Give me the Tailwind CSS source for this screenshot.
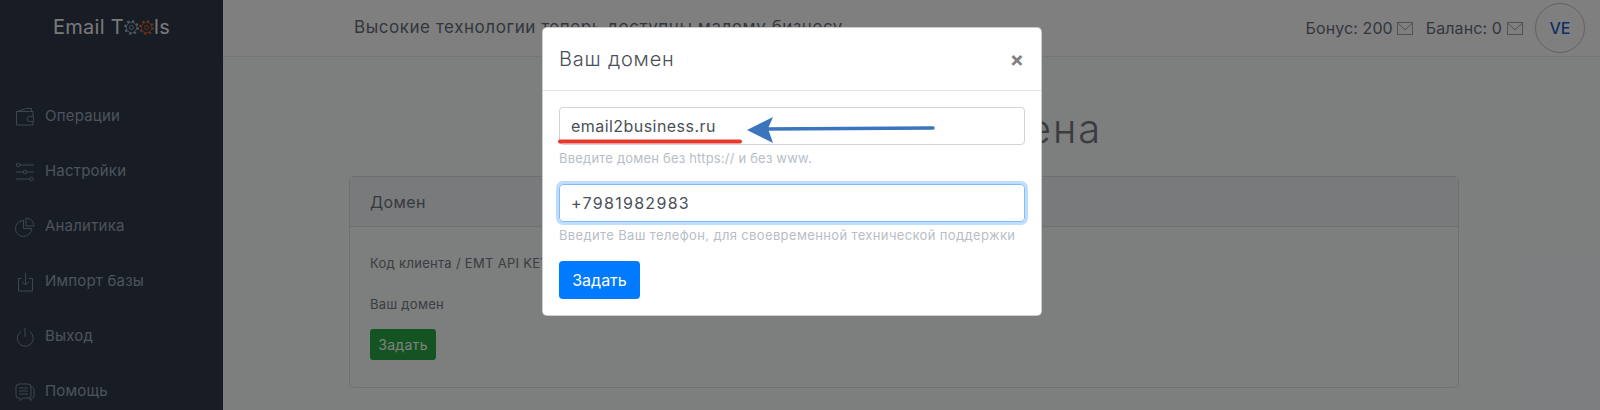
<!DOCTYPE html>
<html lang="ru">

<head>
    <meta charset="UTF-8">
    <title>Email Tools</title>
    <script src="https://cdn.jsdelivr.net/npm/@tailwindcss/browser@4"></script>
</head>

<body class="font-['Inter',sans-serif] overflow-hidden">

    <div class="relative flex h-[410px] w-[1600px] overflow-hidden bg-[#fafcfd]">

        <!-- Sidebar -->
        <aside class="w-[223px] shrink-0 bg-[#303a4a] text-[#9aa6b8]">
            <div class="flex h-[54px] items-center justify-center text-[20px] tracking-[0.3px] text-[#f0f2f4]">
                <span>Email T</span>
                <svg class="h-[15px] w-[15px] text-[#a9c4e0]" viewBox="0 0 16 16" fill="none" stroke="currentColor" stroke-width="0.8">
                    <circle cx="8" cy="8" r="5.5" />
                    <circle cx="8" cy="8" r="6.8" stroke-width="2" stroke-dasharray="2.4 2.9" />
                    <circle cx="8" cy="8" r="2.2" />
                </svg>
                <svg class="h-[15px] w-[15px] text-[#f0642a]" viewBox="0 0 16 16" fill="none" stroke="currentColor" stroke-width="0.8">
                    <circle cx="8" cy="8" r="5.5" />
                    <circle cx="8" cy="8" r="6.8" stroke-width="2" stroke-dasharray="2.4 2.9" />
                    <circle cx="8" cy="8" r="2.2" />
                </svg>
                <span>ls</span>
            </div>

            <nav class="mt-[35px] flex flex-col text-[15px] tracking-[0.2px]">
                <a class="flex h-[55px] items-center gap-[10px] pl-[15px]">
                    <svg class="h-[20px] w-[20px] text-[#7f8b9b]" viewBox="0 0 20 20" fill="none" stroke="currentColor">
                        <path d="M1.5 4.500v13.500h16.500v-3M1.500 4.500h16.500v5M1.500 4.500 12 1.500h4.500v3" />
                        <path d="M18.500 9.500h-4a2.500 2.500 0 0 0 0 5h4z" />
                    </svg>
                    <span>Операции</span>
                </a>
                <a class="flex h-[55px] items-center gap-[10px] pl-[15px]">
                    <svg class="h-[20px] w-[20px] text-[#7f8b9b]" viewBox="0 0 20 20" fill="none" stroke="currentColor">
                        <path d="M5 3h14M1 10h7M12 10h7M1 17h13" />
                        <circle cx="3.200" cy="3" r="1.800" />
                        <circle cx="10" cy="10" r="1.800" />
                        <circle cx="16.500" cy="17" r="1.800" />
                    </svg>
                    <span>Настройки</span>
                </a>
                <a class="flex h-[55px] items-center gap-[10px] pl-[15px]">
                    <svg class="h-[20px] w-[20px] text-[#7f8b9b]" viewBox="0 0 20 20" fill="none" stroke="currentColor">
                        <path d="M8.500 3.500a8 8 0 1 0 8 8h-8z" />
                        <path d="M11 1a8 8 0 0 1 8 8h-8z" />
                    </svg>
                    <span>Аналитика</span>
                </a>
                <a class="flex h-[55px] items-center gap-[10px] pl-[15px]">
                    <svg class="h-[20px] w-[20px] text-[#7f8b9b]" viewBox="0 0 20 20" fill="none" stroke="currentColor">
                        <path d="M7 6.500H3.500v12.500h14V6.500H14" />
                        <path d="M10.500 1v11.500M7 9.500l3.500 3.500 3.500-3.500" />
                    </svg>
                    <span>Импорт базы</span>
                </a>
                <a class="flex h-[55px] items-center gap-[10px] pl-[15px]">
                    <svg class="h-[20px] w-[20px] text-[#7f8b9b]" viewBox="0 0 20 20" fill="none" stroke="currentColor">
                        <path d="M6 4.500a8 8 0 1 0 8.500 0" />
                        <path d="M10 1v9" />
                    </svg>
                    <span>Выход</span>
                </a>
                <a class="flex h-[55px] items-center gap-[10px] pl-[15px]">
                    <svg class="h-[20px] w-[20px] text-[#7f8b9b]" viewBox="0 0 20 20" fill="none" stroke="currentColor">
                        <path d="M4 2h9a3 3 0 0 1 3 3v8a3 3 0 0 1-3 3H8l-3 2.500V16H4a3 3 0 0 1-3-3V5a3 3 0 0 1 3-3z" />
                        <path d="M16 4.500c2 .5 3 1.500 3 3.500v6c0 1.500-1 2.500-3 2.500v2l-3-2.500M4 6h9M4 9h9M4 12h9" />
                    </svg>
                    <span>Помощь</span>
                </a>
            </nav>
        </aside>

        <!-- Right column -->
        <div class="flex min-w-0 flex-1 flex-col">
            <header class="flex h-[57px] shrink-0 items-center justify-between border-b border-[#e6edf2] bg-white pl-[131px] pr-[15px] text-[#666e7a]">
                <p class="text-[17px] tracking-[0.55px]">Высокие технологии теперь доступны малому бизнесу</p>
                <div class="flex items-center text-[16px] tracking-[0.1px]">
                    <span>Бонус: 200</span>
                    <svg class="ml-[4px] h-[13px] w-[16px] text-[#a0a6ac]" viewBox="0 0 16 13" fill="none" stroke="currentColor">
                        <rect x="0.500" y="0.500" width="15" height="12" />
                        <path d="M0.500 1 8 8l7.500-7" />
                    </svg>
                    <span class="ml-[13px]">Баланс: 0</span>
                    <svg class="ml-[5px] h-[13px] w-[16px] text-[#a0a6ac]" viewBox="0 0 16 13" fill="none" stroke="currentColor">
                        <rect x="0.500" y="0.500" width="15" height="12" />
                        <path d="M0.500 1 8 8l7.500-7" />
                    </svg>
                    <div class="ml-[12px] flex h-[50px] w-[50px] items-center justify-center rounded-full border border-[#c4c4c4] text-[16px] font-medium text-[#1a5fd0]">VE</div>
                </div>
            </header>

            <main class="pl-[126px] pr-[141px]">
                <h1 class="mt-[48px] h-[71px] text-center text-[40px] font-light leading-[48px] tracking-[2px] text-[#74797f]">Настройка домена</h1>

                <section class="h-[212px] rounded-[4px] border border-[#dcdfe1]">
                    <div class="flex h-[50px] items-center border-b border-[#dcdfe1] bg-[#f3f5f6] pl-[20px] text-[16px] tracking-[0.4px] text-[#6c737c]">Домен</div>
                    <div class="pl-[20px] pt-[26px] text-[13px] tracking-[0.3px] text-[#747a84]">
                        <p class="h-[20px] leading-[20px]">Код клиента / EMT API KEY</p>
                        <p class="mt-[21px] h-[20px] leading-[20px]">Ваш домен</p>
                        <button class="mt-[15px] flex h-[31px] w-[66px] items-center justify-center rounded-[3px] bg-[#28a745] text-[14px] text-white">Задать</button>
                    </div>
                </section>
            </main>
        </div>

        <!-- Modal backdrop -->
        <div class="absolute inset-0 bg-black/50 pl-[542px] pt-[27px]">
            <div class="relative w-[500px] rounded-[5px] border border-black/20 bg-white">
                <div class="flex h-[63px] items-center justify-between border-b border-[#dee2e6] pl-[16px] pr-[17px]">
                    <h5 class="text-[20px] font-light tracking-[0.8px] text-[#495057]">Ваш домен</h5>
                    <span class="text-[21px] font-bold leading-none text-[#7f7f7f]">×</span>
                </div>

                <div class="p-4">
                    <input type="text" value="email2business.ru" class="block h-[38px] w-full rounded-[4px] border border-[#ced4da] pl-[11px] pr-3 text-[16px] tracking-[0.45px] text-[#495057]">
                    <p class="mt-[4px] h-[19px] text-[13px] leading-[19px] tracking-[0.2px] text-[#b8bec6]">Введите домен без https:// и без www.</p>

                    <input type="text" value="+7981982983" class="mt-4 block h-[38px] w-full rounded-[4px] border border-[#80bdff] pl-[11px] pr-3 text-[16px] tracking-[1.3px] text-[#495057] ring-[3px] ring-[#007bff]/25">
                    <p class="mt-[4px] h-[19px] text-[13px] leading-[19px] tracking-[0.36px] text-[#b8bec6]">Введите Ваш телефон, для своевременной технической поддержки</p>

                    <button class="mt-4 flex h-[38px] w-[81px] items-center justify-center rounded-[4px] bg-[#007bff] text-[16px] text-white">Задать</button>
                </div>

                <!-- Hand-drawn annotation over the first field -->
                <svg class="absolute left-[14px] top-[85px] h-[50px] w-[400px]" viewBox="0 0 400 50" fill="none">
                    <path d="M3 28.500H183" stroke="#e8392f" stroke-width="4" stroke-linecap="round" />
                    <path d="M205 16 376 15" stroke="#3a75bd" stroke-width="3.500" stroke-linecap="round" />
                    <path d="M190 17 216 4 211 15.500 216 30z" fill="#3a75bd" />
                </svg>
            </div>
        </div>
    </div>

</body>

</html>
